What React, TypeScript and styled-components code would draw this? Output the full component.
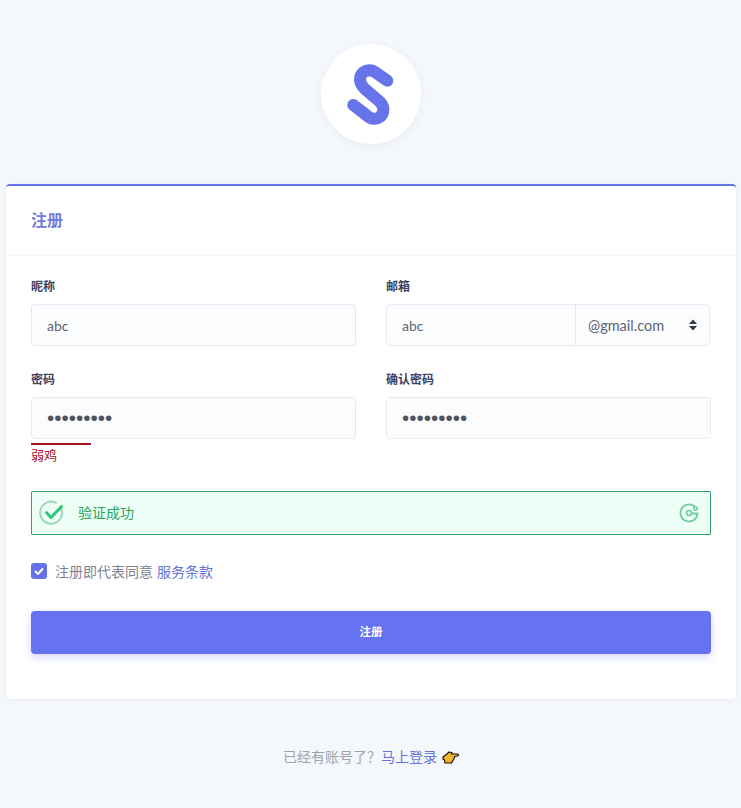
import React from "react";
import styled, { createGlobalStyle } from "styled-components";

const Global = createGlobalStyle`
  html, body { margin: 0; padding: 0; background: #f4f7fb; }
  body { font-family: Lato, "Noto Sans CJK SC", sans-serif; }
  * { box-sizing: border-box; }
`;

const Page = styled.div`
  width: 741px;
  height: 808px;
  padding: 44px 5px 0 6px;
  display: flex;
  flex-direction: column;
  align-items: stretch;
`;
const LogoCircle = styled.div`
  width: 100px;
  height: 100px;
  margin: 0 auto 40px;
  border-radius: 50%;
  background: #fff;
  box-shadow: 0 2px 8px rgba(90, 100, 150, 0.07);
  display: flex;
  align-items: center;
  justify-content: center;
`;
const Card = styled.div`
  background: #fff;
  border-top: 2px solid #6673e6;
  border-radius: 4px;
  height: 515px;
  box-shadow: 0 1px 4px rgba(90, 100, 150, 0.08);
`;
const CardHeader = styled.div`
  height: 70px;
  padding: 0 25px 2px;
  display: flex;
  align-items: center;
  border-bottom: 1px solid #f5f6f9;
`;
const Title = styled.h1`
  margin: 0;
  font-size: 16px;
  font-weight: 700;
  line-height: 20px;
  color: #6f7bdc;
`;
const CardBody = styled.div`
  padding: 22px 25px 0;
`;
const Grid = styled.div`
  display: grid;
  grid-template-columns: 325px 325px;
  column-gap: 30px;
  row-gap: 25px;
`;
const Field = styled.div`
  display: flex;
  flex-direction: column;
  min-width: 0;
`;
const Label = styled.label`
  font-size: 12px;
  font-weight: 700;
  line-height: 16px;
  height: 18px;
  padding-top: 1px;
  margin-bottom: 8px;
  color: #3d425e;
`;
const Input = styled.div`
  height: 42px;
  padding: 0 15px;
  display: flex;
  align-items: center;
  background: #fbfcfe;
  border: 1px solid #e6e9f0;
  border-radius: 4px;
  color: #5f6472;
  font-size: 14px;
`;
const Dots = styled.span`
  font-family: "Liberation Sans", sans-serif;
  font-size: 20.700px;
  line-height: 20px;
  color: #50545f;
`;
const Group = styled.div`
  height: 42px;
  width: 324px;
  display: flex;
  background: #fbfcfe;
  border: 1px solid #e6e9f0;
  border-radius: 4px;
`;
const GroupInput = styled.div`
  width: 189px;
  padding: 0 15px;
  display: flex;
  align-items: center;
  color: #5f6472;
  font-size: 14px;
  border-right: 1px solid #e6e9f0;
`;
const GroupSelect = styled.div`
  flex: 1;
  padding: 0 11px 0 12px;
  display: flex;
  align-items: center;
  justify-content: space-between;
  color: #5f6472;
  font-size: 14.500px;
`;
const StrengthBar = styled.div`
  width: 60px;
  height: 2px;
  margin-top: 4px;
  background: #a5121b;
`;
const StrengthText = styled.div`
  font-size: 13px;
  line-height: 18px;
  margin-top: 1px;
  color: #a5121b;
`;
const Verify = styled.div`
  margin-top: 27px;
  height: 44px;
  display: flex;
  align-items: center;
  padding: 0 11px 0 7px;
  background: #edfff6;
  border: 1px solid #31a56d;
  border-radius: 1px;
`;
const VerifyText = styled.span`
  margin-left: 13px;
  padding-bottom: 2px;
  flex: 1;
  font-size: 14px;
  color: #22a45d;
`;
const Agree = styled.div`
  margin-top: 27px;
  height: 18px;
  display: flex;
  align-items: center;
  font-size: 14px;
  color: #80838f;
`;
const CheckBox = styled.span`
  width: 16px;
  height: 16px;
  margin-right: 8px;
  border-radius: 3px;
  background: #6673e6;
  display: flex;
  align-items: center;
  justify-content: center;
`;
const LinkText = styled.a`
  color: #6673d6;
  margin-left: 4px;
`;
const Submit = styled.button`
  margin-top: 31px;
  padding: 0 0 3px;
  width: 100%;
  height: 43px;
  border: 0;
  border-radius: 4px;
  background: #6673f0;
  color: #fff;
  font-family: inherit;
  font-size: 11.500px;
  font-weight: 700;
  box-shadow: 0 3px 8px rgba(102, 115, 240, 0.3);
`;
const Footer = styled.div`
  margin-top: 47px;
  height: 20px;
  display: flex;
  align-items: center;
  justify-content: center;
  font-size: 14px;
  color: #a0a3ad;
`;
const FooterLink = styled.a`
  color: #6673d6;
`;
const Hand = styled.svg`
  margin-left: 5px;
  margin-top: 3px;
`;

export default function App() {
  return (
    <>
      <Global />
      <Page>
        <LogoCircle>
          <svg width="50" height="64" viewBox="0 0 50 64">
            <path d="M41.300 18.700 L29 10 C22 6 14 10 14 17.500 C14 21 16 24 19 27 L33 39 C36 41.500 37.500 45 37.300 48 C37 54 32 58 26 56.500 C23.500 56 21.500 54 19 52 L7.300 43" fill="none" stroke="#6673e9" strokeWidth="12" strokeLinecap="round" />
          </svg>
        </LogoCircle>
        <Card>
          <CardHeader><Title>注册</Title></CardHeader>
          <CardBody>
            <Grid>
              <Field>
                <Label>昵称</Label>
                <Input>abc</Input>
              </Field>
              <Field>
                <Label>邮箱</Label>
                <Group>
                  <GroupInput>abc</GroupInput>
                  <GroupSelect>
                    @gmail.com
                    <svg width="10" height="12" viewBox="0 0 10 12"><path d="M5 0.500 L9 5 H1 Z M5 11.500 L1 7 H9 Z" fill="#343a40" /></svg>
                  </GroupSelect>
                </Group>
              </Field>
              <Field>
                <Label>密码</Label>
                <Input><Dots>•••••••••</Dots></Input>
                <StrengthBar />
                <StrengthText>弱鸡</StrengthText>
              </Field>
              <Field>
                <Label>确认密码</Label>
                <Input><Dots>•••••••••</Dots></Input>
              </Field>
            </Grid>
            <Verify>
              <svg width="26" height="26" viewBox="0 0 26 26">
                <path d="M22.500 9 A11 11 0 1 1 17 2.800" fill="none" stroke="#9fd8b8" strokeWidth="2" strokeLinecap="round" />
                <path d="M7.500 12.500 L12 17.500 L22.500 6.500" fill="none" stroke="#2fc878" strokeWidth="3" strokeLinecap="round" strokeLinejoin="round" />
              </svg>
              <VerifyText>验证成功</VerifyText>
              <svg width="20" height="20" viewBox="0 0 20 20">
                <path d="M15.500 3.500 A8.500 8.500 0 1 0 18.500 10.500 L13 10.500" fill="none" stroke="#6fcaa0" strokeWidth="1.800" strokeLinecap="round" />
                <circle cx="10" cy="10" r="2.500" fill="none" stroke="#6fcaa0" strokeWidth="1.600" />
                <circle cx="16.500" cy="5.500" r="1.800" fill="none" stroke="#6fcaa0" strokeWidth="1.400" />
              </svg>
            </Verify>
            <Agree>
              <CheckBox>
                <svg width="10" height="8" viewBox="0 0 10 8"><path d="M1 4 L4 7 L9 1.500" fill="none" stroke="#fff" strokeWidth="2" /></svg>
              </CheckBox>
              注册即代表同意<LinkText>服务条款</LinkText>
            </Agree>
            <Submit>注册</Submit>
          </CardBody>
        </Card>
        <Footer>
          已经有账号了？<FooterLink>马上登录</FooterLink>
          <Hand width="17" height="13" viewBox="0 0 17 13">
            <path d="M1 6 L5 3 L7 1 L10 1.500 L9.500 3 L16 3 C16.800 4 16.500 5 15 5 L12.500 5.500 L12 8 L10.500 10 L9.500 12 L3 12 L2.500 9 L1 8 Z" fill="#f5b62e" stroke="#111" strokeWidth="1.200" strokeLinejoin="round" />
          </Hand>
        </Footer>
      </Page>
    </>
  );
}
